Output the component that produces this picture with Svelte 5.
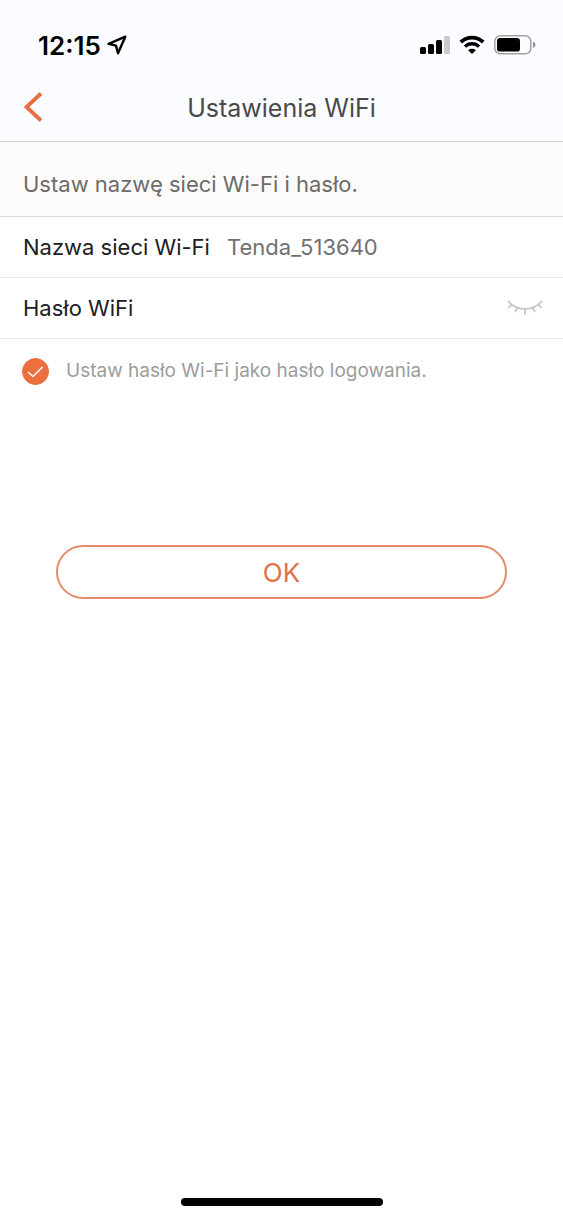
<script lang="ts">
  let networkName = $state('Tenda_513640');
  let password = $state('');
  let showPassword = $state(false);
  let useAsLogin = $state(true);
</script>

<div class="screen">
  <header>
    <div class="status">
      <div class="clock">
        <span>12:15</span>
        <svg width="20" height="20" viewBox="0 0 20 20" aria-hidden="true">
          <path d="M18.3 1.7 1.6 8.9 9 10.6 11 18.3Z" fill="none" stroke="#000" stroke-width="2.4" stroke-linejoin="round" />
        </svg>
      </div>
      <div class="indicators">
        <svg width="30" height="20" viewBox="0 0 30 20" aria-hidden="true">
          <rect x="0" y="12" width="6" height="7" rx="1.5" />
          <rect x="8" y="9" width="6" height="10" rx="1.5" />
          <rect x="16" y="5" width="6" height="14" rx="1.5" />
          <rect x="24" y="1" width="6" height="18" rx="1.5" fill="#c9cacc" />
        </svg>
        <svg width="26" height="20" viewBox="0 0 26 20" aria-hidden="true">
          <path d="M1.8 7.2A16 16 0 0 1 24.2 7.2" fill="none" stroke="#000" stroke-width="3.8" />
          <path d="M6 11.6A10 10 0 0 1 20 11.6" fill="none" stroke="#000" stroke-width="3.4" />
          <path d="M13 19 9.2 15.2A5.6 5.6 0 0 1 16.8 15.2Z" />
        </svg>
        <svg width="42" height="20" viewBox="0 0 42 20" aria-hidden="true">
          <rect x="0.8" y="0.8" width="36" height="18" rx="5.5" fill="none" stroke="#a0a1a3" stroke-width="1.5" />
          <rect x="3" y="3" width="23" height="13.6" rx="3.2" />
          <path d="M39 6.5Q41.5 7.5 41.5 9.8T39 13Z" fill="#909193" />
        </svg>
      </div>
    </div>
    <nav>
      <button class="back" type="button" aria-label="Wstecz">
        <svg width="20" height="30" viewBox="0 0 20 30" aria-hidden="true">
          <path d="M18 1.5 3.5 15 18 28.5" fill="none" stroke="#e66f44" stroke-width="3.8" />
        </svg>
      </button>
      <h1>Ustawienia WiFi</h1>
    </nav>
  </header>

  <main>
    <p class="notice">Ustaw nazwę sieci Wi-Fi i hasło.</p>
    <form onsubmit={(event) => event.preventDefault()}>
      <div class="row">
        <label for="network">Nazwa sieci Wi-Fi</label>
        <input id="network" type="text" bind:value={networkName} />
      </div>
      <div class="row">
        <label for="password">Hasło WiFi</label>
        <input id="password" type={showPassword ? 'text' : 'password'} bind:value={password} />
        <button class="reveal" type="button" aria-label="Pokaż hasło" onclick={() => (showPassword = !showPassword)}>
          <svg width="36" height="16" viewBox="0 0 36 16" fill="none" stroke="#c4c4c4" stroke-width="1.7" stroke-linecap="round" aria-hidden="true">
            <path d="M1.5 1.5Q8 9 18 9T34.5 1.5M4.5 4.5 1.8 7.4M10.5 7.6 8.4 11.4M18 9V14.5M25.5 7.6 27.6 11.4M31.5 4.5 34.2 7.4" />
          </svg>
        </button>
      </div>
      <label class="check">
        <input type="checkbox" bind:checked={useAsLogin} />
        <span>Ustaw hasło Wi-Fi jako hasło logowania.</span>
      </label>
      <button class="submit" type="submit">OK</button>
    </form>
  </main>

  <div class="home"></div>
</div>

<style>
  :global(body) {
    margin: 0;
    background: #fff;
  }

  .screen {
    display: flex;
    flex-direction: column;
    min-height: 100vh;
    font-family: Inter, "Liberation Sans", sans-serif;
    font-size: 22px;
    color: #202022;
  }

  button,
  input {
    margin: 0;
    padding: 0;
    border: 0;
    background: none;
    font: inherit;
    color: inherit;
  }

  button {
    cursor: pointer;
  }

  svg {
    display: block;
  }

  header {
    background: #fafcff;
    border-bottom: 1px solid #d5d3d5;
  }

  .status {
    display: flex;
    align-items: flex-end;
    justify-content: space-between;
    height: 61px;
    padding: 0 27px 0 38px;
  }

  .clock,
  .indicators {
    display: flex;
    align-items: center;
    height: 32px;
  }

  .clock {
    gap: 6px;
    font-size: 26px;
    font-weight: 600;
    color: #000;
  }

  .indicators {
    gap: 9px;
  }

  nav {
    display: grid;
    grid-template-columns: 64px 1fr 64px;
    align-items: center;
    height: 80px;
  }

  .back {
    padding: 12px 0 0 23px;
  }

  h1 {
    margin: 0;
    padding-top: 14px;
    font-size: 25px;
    line-height: 32px;
    font-weight: 400;
    text-align: center;
    color: #4a4a4d;
  }

  .notice {
    margin: 0;
    padding: 28px 23px 18px;
    line-height: 28px;
    color: #6c6b6b;
    background: #fdfbf9;
    border-bottom: 1px solid #dedcdb;
  }

  .row {
    display: flex;
    align-items: center;
    height: 60px;
    padding: 0 20px 0 23px;
    border-bottom: 1px solid #e9e9e9;
  }

  .row input {
    flex: 1;
    min-width: 0;
    margin-left: 17px;
    color: #707072;
    outline: none;
  }

  .check {
    display: flex;
    align-items: center;
    gap: 17px;
    padding: 18px 22px;
    font-size: 19px;
    line-height: 28px;
    color: #9c9c9c;
  }

  .check input {
    appearance: none;
    flex: none;
    width: 27px;
    height: 27px;
    border: 1px solid #eb6f3f;
    border-radius: 50%;
  }

  .check input:checked {
    background: #eb6f3f url("data:image/svg+xml,%3Csvg xmlns='http://www.w3.org/2000/svg' viewBox='0 0 27 27'%3E%3Cpath d='M6 14l5 4.500L20.500 9' fill='none' stroke='white' stroke-width='1.6'/%3E%3C/svg%3E") center / 27px 27px;
  }

  .submit {
    display: block;
    width: 80%;
    height: 54px;
    margin: 142px auto 40px;
    border: 2px solid #e58a6b;
    border-radius: 27px;
    font-size: 26px;
    color: #e2714a;
  }

  .home {
    width: 202px;
    height: 8px;
    margin: auto auto 12px;
    border-radius: 4px;
    background: #000;
  }
</style>
